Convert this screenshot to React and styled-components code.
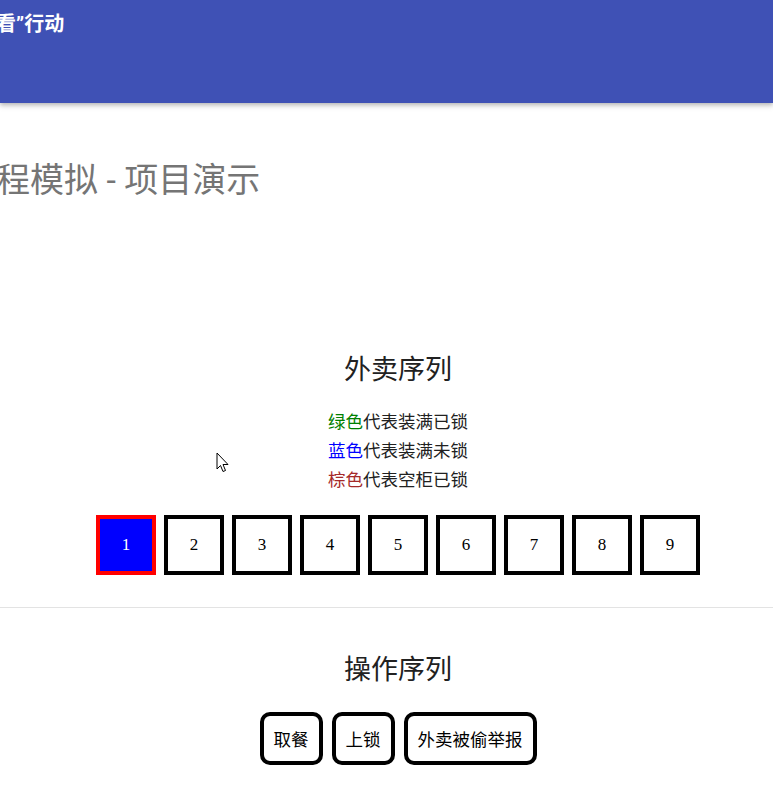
import React from "react";
import styled, { createGlobalStyle } from "styled-components";

const GlobalStyle = createGlobalStyle`
  html, body {
    margin: 0;
    padding: 0;
    background: #ffffff;
    overflow: hidden;
  }
  body {
    font-family: Roboto, "Noto Sans CJK SC", sans-serif;
    color: #212121;
  }
`;

const Page = styled.div`
  position: relative;
  width: 773px;
  height: 796px;
  overflow: hidden;
`;

const AppBar = styled.header`
  height: 103px;
  background-color: #3f51b5;
  box-shadow: 0 2px 4px rgba(0, 0, 0, 0.22), 0 4px 6px rgba(0, 0, 0, 0.08);
  padding-top: 12px;
  box-sizing: border-box;
`;

const AppTitle = styled.div`
  margin-left: -4px;
  color: #ffffff;
  font-size: 20px;
  font-weight: 700;
  line-height: 24px;
  white-space: nowrap;
`;

const PageTitle = styled.h1`
  margin: 57px 0 0 -4px;
  font-size: 34px;
  font-weight: 400;
  line-height: 40px;
  color: #757575;
  white-space: nowrap;
`;

const Section = styled.section`
  display: flex;
  flex-direction: column;
  align-items: center;
  padding-left: 23px;
  margin-top: ${({ $top }) => $top}px;
`;

const SectionTitle = styled.h2`
  margin: 0;
  font-size: 27px;
  font-weight: 400;
  line-height: 36px;
  color: #212121;
`;

const Legend = styled.div`
  margin-top: 20px;
  font-size: 17.5px;
  line-height: 29px;
  text-align: center;
  color: #212121;
`;

const Swatch = styled.span`
  color: ${({ $color }) => $color};
`;

const BoxRow = styled.div`
  display: flex;
  gap: 8px;
  margin-top: 20px;
`;

const Box = styled.div`
  width: 60px;
  height: 60px;
  box-sizing: border-box;
  border: 4px solid ${({ $active }) => ($active ? "#ff0000" : "#000000")};
  background: ${({ $active }) => ($active ? "#0000ff" : "#ffffff")};
  color: ${({ $active }) => ($active ? "#ffffff" : "#000000")};
  display: flex;
  align-items: center;
  justify-content: center;
  font-family: "Liberation Serif", serif;
  font-size: 17px;
  font-variant-numeric: oldstyle-nums;
`;

const Divider = styled.hr`
  margin: 32px 0 0;
  border: none;
  border-top: 1px solid #e3e3e3;
`;

const ButtonRow = styled.div`
  display: flex;
  gap: 9px;
  margin-top: 24px;
`;

const ActionButton = styled.button`
  height: 53px;
  box-sizing: border-box;
  padding: 0 10px;
  border: 4px solid #000000;
  border-radius: 10px;
  background: #ffffff;
  color: #000000;
  font-family: Roboto, "Noto Sans CJK SC", sans-serif;
  font-size: 17.5px;
  cursor: pointer;
`;

const Cursor = styled.svg`
  position: absolute;
  left: 216px;
  top: 452px;
  pointer-events: none;
`;

const legend = [
  { color: "#008000", name: "绿色", text: "代表装满已锁" },
  { color: "#0000ff", name: "蓝色", text: "代表装满未锁" },
  { color: "#a52a2a", name: "棕色", text: "代表空柜已锁" },
];

const boxes = [1, 2, 3, 4, 5, 6, 7, 8, 9];
const actions = ["取餐", "上锁", "外卖被偷举报"];

export default function App() {
  return (
    <Page>
      <GlobalStyle />
      <AppBar>
        <AppTitle>看”行动</AppTitle>
      </AppBar>
      <PageTitle>程模拟 - 项目演示</PageTitle>

      <Section $top={152}>
        <SectionTitle>外卖序列</SectionTitle>
        <Legend>
          {legend.map((l) => (
            <div key={l.name}>
              <Swatch $color={l.color}>{l.name}</Swatch>
              {l.text}
            </div>
          ))}
        </Legend>
        <BoxRow>
          {boxes.map((n) => (
            <Box key={n} $active={n === 1}>
              {n}
            </Box>
          ))}
        </BoxRow>
      </Section>

      <Divider />

      <Section $top={44}>
        <SectionTitle>操作序列</SectionTitle>
        <ButtonRow>
          {actions.map((a) => (
            <ActionButton key={a}>{a}</ActionButton>
          ))}
        </ButtonRow>
      </Section>

      <Cursor width="14" height="22" viewBox="0 0 14 22">
        <path
          d="M1 1 L1 17 L4.5 13.5 L7 19.5 L9.5 18.5 L7 12.5 L12 12.5 Z"
          fill="#ffffff"
          stroke="#000000"
          strokeWidth="1"
          strokeLinejoin="round"
        />
      </Cursor>
    </Page>
  );
}
